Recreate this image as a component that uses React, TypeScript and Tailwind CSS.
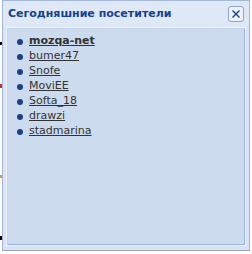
export default function App() {
  const visitors = ["bumer47", "Snofe", "MoviEE", "Softa_18", "drawzi", "stadmarina"];

  return (
    <div className="w-[252px] h-[254px] bg-white relative overflow-hidden" style={{ fontFamily: "Tahoma, 'DejaVu Sans', sans-serif" }}>
      {/* bits of the page behind the popup */}
      <div className="absolute left-0 top-[42px] w-[2px] h-[3px] bg-black" />
      <div className="absolute left-0 top-[84px] w-[2px] h-[4px] bg-[#c03030]" />
      <div className="absolute left-0 top-[175px] w-[2px] h-[3px] bg-[#c8a040]" />
      <div className="absolute left-0 top-[236px] w-[2px] h-[4px] bg-black" />
      <div className="ml-[2px] mr-[2px] h-[251px] border border-[#a4b8d6] border-b-[#9aa6b8] bg-[#d9e3f1] flex flex-col">
        <div className="h-[26px] flex items-center justify-between pl-[5px] pr-[5px] bg-[#dfe8f6]">
          <span className="text-[11px] font-bold text-[#15428b]">Сегодняшние посетители</span>
          <div className="w-[16px] h-[16px] rounded-[3px] border border-[#8ea5c8] bg-[#eef3fb] flex items-center justify-center">
            <svg width="10" height="10" viewBox="0 0 10 10">
              <path d="M1.5 1.5 L8.5 8.5 M8.5 1.5 L1.5 8.5" stroke="#15428b" strokeWidth="1.4" />
            </svg>
          </div>
        </div>
        <div className="flex-1 mx-[3px] mb-[4px] border border-[#eef3fa] flex">
          <div className="flex-1 border border-[#c4d3ea] border-r-[#98b2ea] border-b-[#98b2ea] bg-[#cddbee] pt-[5px] pl-[9px]">
            <ul className="flex flex-col">
              <li className="flex items-center h-[15px]">
                <span className="w-[6px] h-[6px] rounded-full bg-[#1d3f86] mr-[6px]" />
                <a href="#" className="text-[11px] font-bold text-[#333] underline">mozqa-net</a>
              </li>
              {visitors.map((v) => (
                <li key={v} className="flex items-center h-[15px]">
                  <span className="w-[6px] h-[6px] rounded-full bg-[#1d3f86] mr-[6px]" />
                  <a href="#" className="text-[11px] text-[#333] underline">{v}</a>
                </li>
              ))}
            </ul>
          </div>
        </div>
      </div>
    </div>
  );
}
